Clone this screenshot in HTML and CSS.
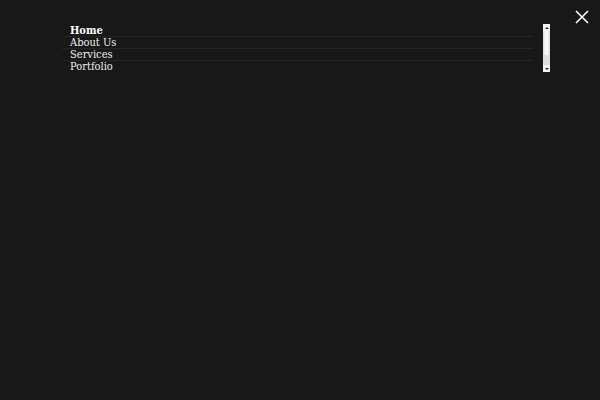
FILE: index.html
```html
<!DOCTYPE html>
<html>
<head>
<meta charset="utf-8">
<link rel="stylesheet" href="styles.css">
</head>
<body>
<div class="overlay">
  <div class="menu-wrap">
    <nav class="menu">
      <ul class="menu-list">
        <li class="menu-item active">Home</li>
        <li class="menu-item">About Us</li>
        <li class="menu-item">Services</li>
        <li class="menu-item">Portfolio</li>
      </ul>
    </nav>
    <div class="scrollbar">
      <div class="sb-btn"><span class="arrow up"></span></div>
      <div class="sb-track"><div class="sb-thumb"></div></div>
      <div class="sb-btn"><span class="arrow down"></span></div>
    </div>
  </div>
  <button class="close" aria-label="Close">
    <svg width="14" height="14" viewBox="0 0 14 14"><path d="M1 1L13 13M13 1L1 13" stroke="#fff" stroke-width="1.6" fill="none"/></svg>
  </button>
</div>
</body>
</html>
```
FILE: styles.css
```css
html, body {
  margin: 0;
  height: 100%;
  background: #181818;
}
.overlay {
  display: flex;
  align-items: flex-start;
  padding: 10px 11px 0 62px;
}
.menu-wrap {
  margin-top: 14px;
  display: flex;
  height: 48px;
}
.menu {
  width: 481px;
  height: 48px;
  overflow: hidden;
}
.menu-list {
  list-style: none;
  margin: 0 10px 0 0;
  padding: 0;
}
.menu-item {
  font-family: "DejaVu Serif Condensed", "DejaVu Serif", serif;
  font-size: 11px;
  line-height: 11px;
  padding-top: 1px;
  margin-top: -1px;
  color: #f0f0f0;
  padding-left: 8px;
  border-bottom: 1px solid #262626;
}
.menu-item:first-child {
  margin-top: 0;
}
.menu-item.active {
  font-weight: bold;
  color: #fff;
}
.scrollbar {
  width: 7px;
  height: 48px;
  display: flex;
  flex-direction: column;
  background: #e6e6e6;
}
.sb-btn {
  height: 7px;
  background: #f4f4f4;
  display: flex;
  align-items: center;
  justify-content: center;
}
.arrow {
  width: 0;
  height: 0;
  border-left: 2px solid transparent;
  border-right: 2px solid transparent;
}
.arrow.up {
  border-bottom: 2px solid #222;
}
.arrow.down {
  border-top: 2px solid #222;
}
.sb-track {
  flex: 1;
  display: flex;
  flex-direction: column;
  padding: 0 1px;
  background: #dedede;
}
.sb-thumb {
  height: 24px;
  background: #f7f7f7;
  border-left: 1px solid #ececec;
  border-right: 1px solid #ececec;
}
.close {
  margin-left: auto;
  background: none;
  border: 0;
  padding: 0;
  width: 14px;
  height: 14px;
  display: flex;
}
```
